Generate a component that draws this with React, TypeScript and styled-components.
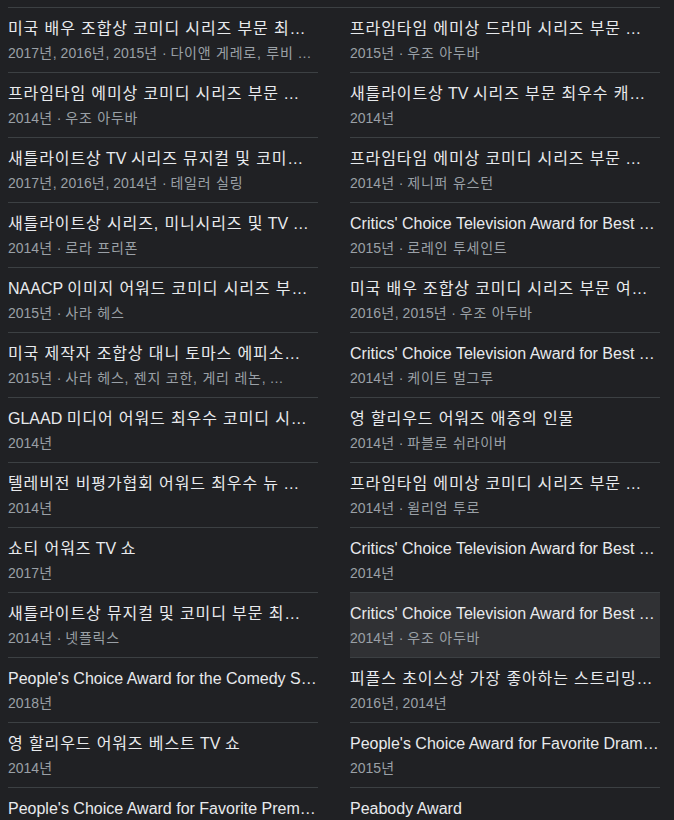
import React from "react";
import styled, { createGlobalStyle } from "styled-components";

const GlobalStyle = createGlobalStyle`
  html, body {
    margin: 0;
    padding: 0;
    background: #202124;
  }
  body {
    font-family: "Liberation Sans", Arial, "Noto Sans CJK KR", sans-serif;
    overflow: hidden;
  }
`;

const Page = styled.div`
  padding: 7px 14px 0 8px;
  height: 820px;
  box-sizing: border-box;
  overflow: hidden;
`;

const Grid = styled.div`
  display: grid;
  grid-template-columns: 310px 310px;
  column-gap: 32px;
  border-top: 1px solid #3c4043;
`;

const Item = styled.div<{ $active?: boolean }>`
  display: flex;
  flex-direction: column;
  padding: 9px 0;
  border-bottom: 1px solid #3c4043;
  background: ${(p) => (p.$active ? "#303134" : "transparent")};
  min-width: 0;
  cursor: pointer;
`;

const Title = styled.div`
  font-size: 16px;
  line-height: 24px;
  color: #e8eaed;
  white-space: nowrap;
  overflow: hidden;
  text-overflow: ellipsis;
`;

const Sub = styled.div`
  margin-top: 2px;
  font-size: 14px;
  line-height: 20px;
  color: #9aa0a6;
  white-space: nowrap;
  overflow: hidden;
  text-overflow: ellipsis;
`;

const Hangul = styled.span`
  letter-spacing: 0.055em;
`;

const HANGUL_RUN = /([\uAC00-\uD7A3\u3131-\u318E]+(?:[ ,]+[\uAC00-\uD7A3\u3131-\u318E]+)*)/;

function Txt({ text }: { text: string }) {
  const parts = text.split(HANGUL_RUN);
  return (
    <>
      {parts.map((p, i) =>
        i % 2 === 1 ? <Hangul key={i}>{p}</Hangul> : <React.Fragment key={i}>{p}</React.Fragment>
      )}
    </>
  );
}

type Award = { title: string; sub: string; active?: boolean };

const awards: Award[] = [
  { title: "미국 배우 조합상 코미디 시리즈 부문 최…", sub: "2017년, 2016년, 2015년 · 다이앤 게레로, 루비 …" },
  { title: "프라임타임 에미상 드라마 시리즈 부문 …", sub: "2015년 · 우조 아두바" },
  { title: "프라임타임 에미상 코미디 시리즈 부문 …", sub: "2014년 · 우조 아두바" },
  { title: "새틀라이트상 TV 시리즈 부문 최우수 캐…", sub: "2014년" },
  { title: "새틀라이트상 TV 시리즈 뮤지컬 및 코미…", sub: "2017년, 2016년, 2014년 · 테일러 실링" },
  { title: "프라임타임 에미상 코미디 시리즈 부문 …", sub: "2014년 · 제니퍼 유스턴" },
  { title: "새틀라이트상 시리즈, 미니시리즈 및 TV …", sub: "2014년 · 로라 프리폰" },
  { title: "Critics' Choice Television Award for Best Supporting Actress in a Drama Series", sub: "2015년 · 로레인 투세인트" },
  { title: "NAACP 이미지 어워드 코미디 시리즈 부…", sub: "2015년 · 사라 헤스" },
  { title: "미국 배우 조합상 코미디 시리즈 부문 여…", sub: "2016년, 2015년 · 우조 아두바" },
  { title: "미국 제작자 조합상 대니 토마스 에피소…", sub: "2015년 · 사라 헤스, 젠지 코한, 게리 레논, …" },
  { title: "Critics' Choice Television Award for Best Supporting Actress in a Comedy Series", sub: "2014년 · 케이트 멀그루" },
  { title: "GLAAD 미디어 어워드 최우수 코미디 시…", sub: "2014년" },
  { title: "영 할리우드 어워즈 애증의 인물", sub: "2014년 · 파블로 쉬라이버" },
  { title: "텔레비전 비평가협회 어워드 최우수 뉴 …", sub: "2014년" },
  { title: "프라임타임 에미상 코미디 시리즈 부문 …", sub: "2014년 · 윌리엄 투로" },
  { title: "쇼티 어워즈 TV 쇼", sub: "2017년" },
  { title: "Critics' Choice Television Award for Best Comedy Series", sub: "2014년" },
  { title: "새틀라이트상 뮤지컬 및 코미디 부문 최…", sub: "2014년 · 넷플릭스" },
  { title: "Critics' Choice Television Award for Best Guest Performer in a Comedy Series", sub: "2014년 · 우조 아두바", active: true },
  { title: "People's Choice Award for the Comedy Streaming Series", sub: "2018년" },
  { title: "피플스 초이스상 가장 좋아하는 스트리밍…", sub: "2016년, 2014년" },
  { title: "영 할리우드 어워즈 베스트 TV 쇼", sub: "2014년" },
  { title: "People's Choice Award for Favorite Dramatic TV Actress", sub: "2015년" },
  { title: "People's Choice Award for Favorite Premium Comedy Series", sub: "2014년" },
  { title: "Peabody Award", sub: "2014년" },
];

export default function App() {
  return (
    <>
      <GlobalStyle />
      <Page>
        <Grid>
          {awards.map((a, i) => (
            <Item key={i} $active={a.active}>
              <Title>
                <Txt text={a.title} />
              </Title>
              <Sub>
                <Txt text={a.sub} />
              </Sub>
            </Item>
          ))}
        </Grid>
      </Page>
    </>
  );
}
